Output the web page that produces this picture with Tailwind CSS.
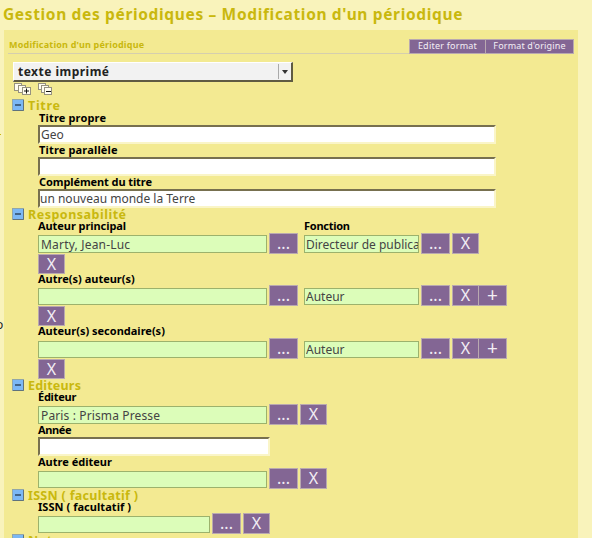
<!DOCTYPE html>
<html lang="fr">
<head>
<meta charset="utf-8">
<title>Gestion des périodiques</title>
<script src="https://cdn.jsdelivr.net/npm/@tailwindcss/browser@4"></script>
</head>
<body class="relative h-[538px] w-[592px] overflow-hidden bg-[#f9f3bb] font-['Noto_Sans',sans-serif] text-black">
<svg class="hidden">
  <symbol id="minus" viewBox="0 0 12 12"><rect x=".5" y=".5" width="11" height="11" fill="#7bb8f5" stroke="#92a7a8"/><path d="M11.5 1v10.5H1" fill="none" stroke="#60737c"/><path d="M3 6h6" stroke="#23384d" stroke-width="1.3"/></symbol>
</svg>
<h1 class="h-[30px] pl-[3px] pt-[3px] text-[15.5px] leading-[23px] font-bold tracking-[0.65px] whitespace-nowrap text-[#c9b80e]">Gestion des périodiques – Modification d'un périodique</h1>
<main class="ml-[4px] h-[508px] w-[574px] overflow-hidden bg-[#f3ea92] pt-[9px]">
  <header class="ml-[4px] mr-[4px] flex h-[15px] justify-between border-b border-[#d5cfae]">
    <h2 class="pl-[1px] text-[9px] leading-[12px] font-bold tracking-[0.2px] text-[#c9b80e]">Modification d'un périodique</h2>
    <div class="flex h-[15px] text-[9px] leading-[12px] text-[#f3eef5]">
      <button class="flex w-[76px] justify-center border border-r-0 border-[#b9a9b0] bg-[#836694] tracking-[0.23px]">Editer format</button>
      <button class="flex w-[89px] justify-center border border-[#b9a9b0] bg-[#836694] tracking-[0.15px]">Format d'origine</button>
    </div>
  </header>
  <div class="mt-[8px] ml-[9px] flex h-[20px] w-[280px] items-center border-t border-r-2 border-b-2 border-l border-t-white border-r-[#5f5b42] border-b-[#5f5b42] border-l-white bg-[#f2f2f2]">
    <span class="flex-1 pl-[4px] text-[12px] leading-[17px] font-bold tracking-[0.48px] text-[#222]">texte imprimé</span>
    <span class="flex h-[15px] w-[13px] items-center justify-center border-l border-[#aaa]"><svg width="6" height="4"><path d="M0 0h6L3 4z" fill="#333"/></svg></span>
  </div>
  <div class="ml-[10px] flex h-[17px] gap-[6px] pt-[1px]">
    <svg width="18" height="13" fill="#fffdf0" stroke="#96927f"><rect x=".5" y=".5" width="7" height="7"/><rect x="4.500" y="2.500" width="7" height="7"/><rect x="8.500" y="4.500" width="8" height="7"/><path d="M10 8h5M12.500 5.500v5" stroke="#111"/></svg>
    <svg width="15" height="13" fill="#fffdf0" stroke="#96927f"><rect x=".5" y=".5" width="7" height="6"/><rect x="3.500" y="2.500" width="7" height="7"/><rect x="6.500" y="4.500" width="7" height="7"/><path d="M8 8.500h5" stroke="#111"/></svg>
  </div>
  <section>
    <h3 class="flex h-[13px] pl-[8px] text-[12.5px] leading-[14px] font-bold tracking-[0.7px] text-[#c9b80e]"><svg class="mr-[4px] h-[12px] w-[12px]"><use href="#minus"/></svg>Titre</h3>
    <div class="pl-[34px] text-[11px] leading-[12px] font-bold">
      <label class="block h-[13px] pl-[1px] leading-[11px] tracking-[0.16px]">Titre propre</label>
      <input value="Geo" class="block h-[19px] w-[458px] border-2 border-t-[#77704f] border-r-[#faf5c8] border-b-[#faf5c8] border-l-[#77704f] bg-white pl-px text-[12px] leading-[15px] font-normal text-[#444]">
      <label class="block h-[13px] pl-[1px] tracking-[0.16px]">Titre parallèle</label>
      <input class="block h-[19px] w-[458px] border-2 border-t-[#77704f] border-r-[#faf5c8] border-b-[#faf5c8] border-l-[#77704f] bg-white">
      <label class="block h-[13px] pl-[1px] leading-[11px] tracking-[-0.09px]">Complément du titre</label>
      <input value="un nouveau monde la Terre" class="block h-[19px] w-[458px] border-2 border-t-[#77704f] border-r-[#faf5c8] border-b-[#faf5c8] border-l-[#77704f] bg-white text-[12px] leading-[15px] font-normal text-[#444]">
    </div>
  </section>
  <section>
    <h3 class="flex h-[12px] pl-[8px] text-[12.5px] leading-[13px] font-bold tracking-[0.5px] text-[#c9b80e]"><svg class="mr-[4px] h-[12px] w-[12px]"><use href="#minus"/></svg>Responsabilité</h3>
    <div class="pl-[34px] text-[11px] leading-[12px] font-bold">
      <div class="flex h-[13px]"><label class="w-[266px] tracking-[-0.07px]">Auteur principal</label><label class="tracking-[-0.26px]">Fonction</label></div>
      <div class="flex h-[21px] items-start text-[16px] leading-[17px] font-normal text-[#f3eef5]">
        <input value="Marty, Jean-Luc" class="mt-[2px] h-[18px] w-[229px] border border-[#9cb26c] bg-[#dcfdb9] pl-[2px] text-[12px] tracking-[0.19px] text-[#444]">
        <button class="ml-[2px] h-[21px] w-[29px] border border-[#b9a9b0] bg-[#836694]">...</button>
        <input value="Directeur de publication" class="mt-[2px] ml-[6px] h-[18px] w-[115px] border border-[#9cb26c] bg-[#dcfdb9] pl-[1px] text-[12px] text-[#444]">
        <button class="ml-[2px] h-[21px] w-[29px] border border-[#b9a9b0] bg-[#836694]">...</button>
        <button class="ml-[2px] h-[21px] w-[27px] border border-[#b9a9b0] bg-[#836694]">X</button>
      </div>
      <button class="block h-[20px] w-[27px] border border-[#b9a9b0] bg-[#836694] text-[16px] leading-[17px] font-normal text-[#f3eef5]">X</button>
      <label class="block h-[11px] leading-[10px]">Autre(s) auteur(s)</label>
      <div class="flex h-[21px] items-start text-[16px] leading-[17px] font-normal text-[#f3eef5]">
        <input class="mt-[3px] h-[17px] w-[229px] border border-[#9cb26c] bg-[#dcfdb9]">
        <button class="ml-[2px] h-[21px] w-[29px] border border-[#b9a9b0] bg-[#836694]">...</button>
        <input value="Auteur" class="mt-[3px] ml-[6px] h-[17px] w-[115px] border border-[#9cb26c] bg-[#dcfdb9] pl-[1px] text-[12px] text-[#444]">
        <button class="ml-[2px] h-[21px] w-[29px] border border-[#b9a9b0] bg-[#836694]">...</button>
        <button class="ml-[2px] h-[21px] w-[27px] border border-[#b9a9b0] bg-[#836694]">X</button>
        <button class="h-[21px] w-[28px] border border-l-0 border-[#b9a9b0] bg-[#836694] text-[19px] leading-[19px]">+</button>
      </div>
      <button class="block h-[20px] w-[27px] border border-[#b9a9b0] bg-[#836694] text-[16px] leading-[17px] font-normal text-[#f3eef5]">X</button>
      <label class="block h-[12px] leading-[10px]">Auteur(s) secondaire(s)</label>
      <div class="flex h-[21px] items-start text-[16px] leading-[17px] font-normal text-[#f3eef5]">
        <input class="mt-[3px] h-[17px] w-[229px] border border-[#9cb26c] bg-[#dcfdb9]">
        <button class="ml-[2px] h-[21px] w-[29px] border border-[#b9a9b0] bg-[#836694]">...</button>
        <input value="Auteur" class="mt-[3px] ml-[6px] h-[17px] w-[115px] border border-[#9cb26c] bg-[#dcfdb9] pl-[1px] text-[12px] text-[#444]">
        <button class="ml-[2px] h-[21px] w-[29px] border border-[#b9a9b0] bg-[#836694]">...</button>
        <button class="ml-[2px] h-[21px] w-[27px] border border-[#b9a9b0] bg-[#836694]">X</button>
        <button class="h-[21px] w-[28px] border border-l-0 border-[#b9a9b0] bg-[#836694] text-[19px] leading-[19px]">+</button>
      </div>
      <button class="block h-[20px] w-[27px] border border-[#b9a9b0] bg-[#836694] text-[16px] leading-[17px] font-normal text-[#f3eef5]">X</button>
    </div>
  </section>
  <section>
    <h3 class="flex h-[12px] pl-[8px] text-[12.5px] leading-[13px] font-bold tracking-[0.2px] text-[#c9b80e]"><svg class="mr-[4px] h-[12px] w-[12px]"><use href="#minus"/></svg>Editeurs</h3>
    <div class="pl-[34px] text-[11px] leading-[12px] font-bold">
      <label class="block h-[13px] tracking-[-0.25px]">Éditeur</label>
      <div class="flex h-[21px] items-start text-[16px] leading-[17px] font-normal text-[#f3eef5]">
        <input value="Paris : Prisma Presse" class="mt-[2px] h-[18px] w-[229px] border border-[#9cb26c] bg-[#dcfdb9] pl-[2px] text-[12px] tracking-[0.13px] text-[#444]">
        <button class="ml-[2px] h-[21px] w-[29px] border border-[#b9a9b0] bg-[#836694]">...</button>
        <button class="ml-[2px] h-[21px] w-[27px] border border-[#b9a9b0] bg-[#836694]">X</button>
      </div>
      <label class="block h-[12px] leading-[9px] tracking-[-0.4px]">Année</label>
      <input class="block h-[19px] w-[232px] border-2 border-t-[#77704f] border-r-[#faf5c8] border-b-[#faf5c8] border-l-[#77704f] bg-white">
      <label class="block h-[12px]">Autre éditeur</label>
      <div class="flex h-[21px] items-start text-[16px] leading-[17px] font-normal text-[#f3eef5]">
        <input class="mt-[3px] h-[17px] w-[229px] border border-[#9cb26c] bg-[#dcfdb9]">
        <button class="ml-[2px] h-[21px] w-[29px] border border-[#b9a9b0] bg-[#836694]">...</button>
        <button class="ml-[2px] h-[21px] w-[27px] border border-[#b9a9b0] bg-[#836694]">X</button>
      </div>
    </div>
  </section>
  <section>
    <h3 class="flex h-[12px] pl-[8px] text-[12.5px] leading-[13px] font-bold tracking-[0.3px] text-[#c9b80e]"><svg class="mr-[4px] h-[12px] w-[12px]"><use href="#minus"/></svg>ISSN ( facultatif )</h3>
    <div class="pl-[34px] text-[11px] leading-[12px] font-bold">
      <label class="block h-[12px] tracking-[0.05px]">ISSN ( facultatif )</label>
      <div class="flex h-[21px] items-start text-[16px] leading-[17px] font-normal text-[#f3eef5]">
        <input class="mt-[3px] h-[17px] w-[172px] border border-[#9cb26c] bg-[#dcfdb9]">
        <button class="ml-[2px] h-[21px] w-[29px] border border-[#b9a9b0] bg-[#836694]">...</button>
        <button class="ml-[2px] h-[21px] w-[27px] border border-[#b9a9b0] bg-[#836694]">X</button>
      </div>
    </div>
  </section>
  <section>
    <h3 class="flex h-[12px] pl-[8px] text-[12.5px] leading-[13px] font-bold tracking-[0.4px] text-[#c9b80e]"><svg class="mr-[4px] h-[12px] w-[12px]"><use href="#minus"/></svg>Notes</h3>
  </section>
</main>
<span class="absolute top-[317px] left-[-4px] text-[12px] leading-[16px] text-[#222]">o</span>
<span class="absolute top-[134px] left-0 h-px w-px bg-[#c9b80e]"></span>
</body>
</html>
